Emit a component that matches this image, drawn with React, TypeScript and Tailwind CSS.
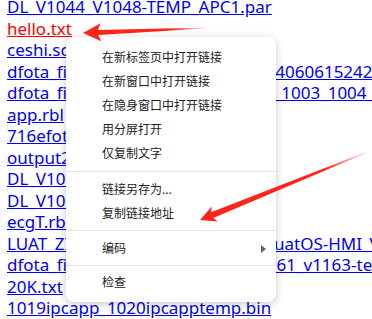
import React from "react";

const lines: { text: string; red?: boolean }[] = [
  { text: "DL_V1044_V1048-TEMP_APC1.par" },
  { text: "hello.txt", red: true },
  { text: "ceshi.script" },
  { text: "dfota_file_V1001_V1003_2023_0_14060615242.bin" },
  { text: "dfota_file_LuatOS_V1001_V10020l_1003_1004_ full.bin" },
  { text: "app.rbl" },
  { text: "716efota_V1001.bin" },
  { text: "output2.bin" },
  { text: "DL_V1001_V1002.par" },
  { text: "DL_V1002_V1003.par" },
  { text: "ecgT.rbl" },
  { text: "LUAT_ZIP_V1001_2023040_Core_LuatOS-HMI_V1001.zip" },
  { text: "dfota_file_LuatOS_Air_v11600_v1161_v1163-test.bin" },
  { text: "20K.txt" },
  { text: "1019ipcapp_1020ipcapptemp.bin" },
];

type Item = { label: string; sub?: boolean } | "sep";

const menu: Item[] = [
  { label: "在新标签页中打开链接" },
  { label: "在新窗口中打开链接" },
  { label: "在隐身窗口中打开链接" },
  { label: "用分屏打开" },
  { label: "仅复制文字" },
  "sep",
  { label: "链接另存为..." },
  { label: "复制链接地址" },
  "sep",
  { label: "编码", sub: true },
  "sep",
  { label: "检查" },
];

const sepClass = [
  "mt-[5px] mb-[6px]",
  "mt-[4px] mb-[6px]",
  "mt-[4px] mb-[5px]",
];

function ContextMenu() {
  let s = 0;
  return (
    <div className="absolute left-[66px] top-[37px] w-[210px] rounded-[8px] bg-white pt-[9px] pb-[7px] shadow-[0_2px_8px_rgba(0,0,0,0.22)] font-['Noto_Sans','Noto_Sans_CJK_SC',sans-serif] text-[12px] text-[#202124]">
      {menu.map((it, i) =>
        it === "sep" ? (
          <div key={i} className={`h-px bg-[#e3e3e3] ${sepClass[s++]}`} />
        ) : (
          <div key={i} className="flex h-[24px] items-center justify-between pl-[36px] pr-[10px]">
            <span>{it.label}</span>
            {it.sub && (
              <svg width="5" height="8" viewBox="0 0 5 8">
                <path d="M0 0 L5 4 L0 8 Z" fill="#5f6368" />
              </svg>
            )}
          </div>
        )
      )}
    </div>
  );
}

function Arrows() {
  return (
    <svg className="pointer-events-none absolute left-0 top-0" width="372" height="319" viewBox="0 0 372 319">
      <defs>
        <linearGradient id="g1" x1="83" y1="0" x2="205" y2="0" gradientUnits="userSpaceOnUse">
          <stop offset="0" stopColor="#ff2418" />
          <stop offset="0.7" stopColor="#ff2418" />
          <stop offset="1" stopColor="#ff2418" stopOpacity="0.1" />
        </linearGradient>
        <linearGradient id="g2" x1="200" y1="220" x2="365" y2="153" gradientUnits="userSpaceOnUse">
          <stop offset="0" stopColor="#ff2418" />
          <stop offset="0.75" stopColor="#ff2418" />
          <stop offset="1" stopColor="#ff2418" stopOpacity="0.15" />
        </linearGradient>
      </defs>
      <polygon
        points="83,33 100.6,23.3 97.9,29.9 205,27.5 205,28.5 98.1,34.9 101.4,41.3"
        fill="url(#g1)"
      />
      <polygon
        points="200,220 211.8,206.6 211,212.3 364.8,152.5 365.2,153.5 213.2,217.9 217.8,221.4"
        fill="url(#g2)"
      />
    </svg>
  );
}

export default function App() {
  return (
    <div className="relative h-[319px] w-[372px] overflow-hidden bg-white">
      <div className="-mt-[4px] pl-[7px] font-['Noto_Sans',sans-serif] text-[17px] leading-[21.5px]">
        {lines.map((l, i) => (
          <div key={i} className="whitespace-nowrap">
            <a href="#" className={`underline ${l.red ? "text-[#ff0000]" : "text-[#0000ee]"}`}>
              {l.text}
            </a>
          </div>
        ))}
      </div>
      <ContextMenu />
      <Arrows />
    </div>
  );
}
